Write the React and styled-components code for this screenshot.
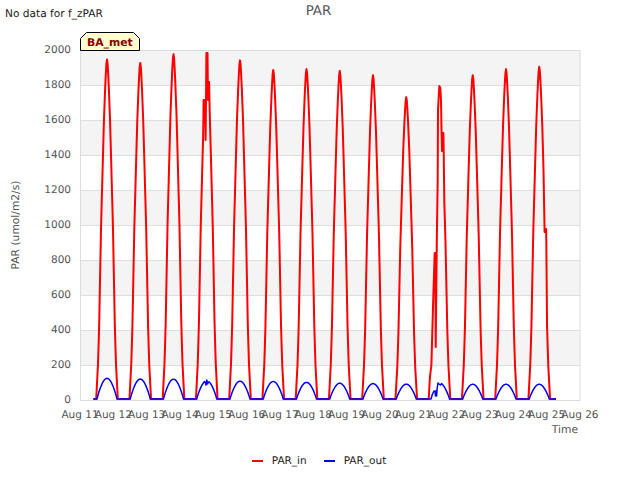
import React from 'react';
import styled, { createGlobalStyle } from 'styled-components';

const Global = createGlobalStyle`
  html, body { margin: 0; padding: 0; background: #fff; }
  body { width: 640px; height: 480px; overflow: hidden; font-family: "DejaVu Sans", sans-serif; text-rendering: geometricPrecision; }
`;
const Figure = styled.div`
  width: 640px; height: 480px; display: flex; flex-direction: column; background: #fff;
`;
const Header = styled.header`
  height: 24px; display: grid; grid-template-columns: 1fr auto 1fr; align-items: start;
`;
const Note = styled.div`
  font-size: 10.6px; line-height: 13px; color: #222; padding: 8px 0 0 5px; white-space: nowrap;
`;
const Title = styled.h1`
  margin: 0; font-size: 13.4px; line-height: 15px; font-weight: 400; color: #555; padding: 4px 3px 0 0;
`;
const Plot = styled.svg`
  display: block; width: 640px; height: 426px; flex: none;
`;
const Legend = styled.footer`
  flex: 1; display: flex; justify-content: center; align-items: flex-start; gap: 17px; padding: 4px 2px 0 0;
`;
const LegendItem = styled.div`
  display: flex; align-items: center; gap: 9px; font-size: 10.5px; line-height: 14px; color: #222;
`;
const Swatch = styled.span`
  width: 11px; height: 2px; background: ${p => p.$color};
`;

const X0 = 80, DAY = 33.33, Y0 = 400, K = 0.175, YD = 399;
const py = v => YD - v * K;
const V = y => (YD - y) / K;
const peaks = [1940, 1920, 1970, 1975, 1935, 1880, 1885, 1875, 1850, 1725, 1790, 1850, 1885, 1898];
const blue = [118, 114, 113, 105, 102, 100, 95, 90, 88, 85, 92, 84, 84, 84];
const centre = i => 107 + i * 33.25;

// Profile of one day's PAR_in: distance from the noon peak -> share of the peak.
const profile = [[0, 1], [0.7, 0.985], [1.65, 0.93], [3, 0.825], [4, 0.72], [4.9, 0.62], [5.9, 0.515], [7.9, 0.206], [9, 0.103], [10.8, 0]];
const share = d => {
  for (let i = 1; i < profile.length; i++) {
    if (d <= profile[i][0]) {
      const [a, b] = [profile[i - 1], profile[i]];
      return a[1] + ((b[1] - a[1]) * (d - a[0])) / (b[0] - a[0]);
    }
  }
  return 0;
};
const redDay = (p, c) => {
  const out = [];
  for (let d = -10.8; d <= 10.8001; d += 0.6) out.push([c + d, p * share(Math.abs(d))]);
  return out;
};
const blueDay = (p, c) => {
  const out = [];
  for (let s = 0; s <= 30; s++) {
    const t = s / 30;
    out.push([c - 10 + 20 * t, p * Math.pow(Math.sin(Math.PI * t), 0.9)]);
  }
  return out;
};
const splice = (pts, from, to, extra) => [
  ...pts.filter(([x]) => x < from),
  ...extra.map(([x, y]) => [x, V(y)]),
  ...pts.filter(([x]) => x > to),
];
const redFix = {
  3: pts => splice(pts, 203.4, 209.4, [[203.6, 100], [205, 100], [205.6, 140], [206, 100], [206.4, 53], [207.5, 53], [208, 100], [208.3, 100], [208.7, 82], [209.1, 82]]),
  10: pts => splice(pts, 430.3, 443.8, [[431.4, 365], [433.2, 300], [434.7, 253], [435.3, 253], [435.7, 347], [436.8, 240], [437.7, 180], [438, 110], [439.3, 86], [440.3, 88], [441, 100], [441.5, 130], [442, 151], [442.6, 151], [443, 133], [443.4, 133], [443.7, 151]]),
  13: pts => splice(pts, 543.8, 546.6, [[544.6, 232], [544.9, 229], [546.1, 229], [546.3, 240]]),
};
const blueFix = {
  3: pts => splice(pts, 205, 209, [[205.4, 383], [206, 385], [206.8, 380], [207.6, 384], [208.4, 382]]),
  10: pts => splice(pts, 429.5, 441, [[431, 399], [432.5, 394], [434, 391], [435, 391], [435.5, 396], [436, 391], [436.6, 396], [437.2, 388], [438, 383], [439, 384], [440.5, 385]]),
};
const build = (vals, day, fix, start, end) => {
  const pts = [[start, 0]];
  vals.forEach((p, i) => {
    const c = centre(i);
    const one = fix[i] ? fix[i](day(p, c)) : day(p, c);
    pts.push(...one);
  });
  pts.push([end, 0]);
  return pts;
};
const toPath = pts => pts.map(([x, v], i) => `${i ? 'L' : 'M'}${x.toFixed(2)} ${py(v).toFixed(2)}`).join('');
const redPts = build(peaks, redDay, redFix, 94, 556);
const bluePts = build(blue, blueDay, blueFix, 93, 556);
const bands = [1800, 1400, 1000, 600, 200];
const yTicks = [0, 200, 400, 600, 800, 1000, 1200, 1400, 1600, 1800, 2000];
const days = Array.from({ length: 16 }, (_, i) => 11 + i);

const Grid = styled.line`stroke: #dedede; stroke-width: 1;`;
const Band = styled.rect`fill: #f4f4f4;`;
const Frame = styled.rect`fill: none; stroke: #dcdcdc; stroke-width: 1;`;
const Tick = styled.text`font-size: 10.5px; fill: #555; font-family: "DejaVu Sans", sans-serif;`;
const AxisName = styled.text`font-size: 10.7px; fill: #555; font-family: "DejaVu Sans", sans-serif;`;
const Line = styled.path`fill: none; stroke: ${p => p.$c}; stroke-width: ${p => p.$w}; stroke-linejoin: round;`;
const Badge = styled.path`fill: #ffffd0; stroke: #000; stroke-width: 1;`;
const BadgeText = styled.text`font-size: 10.8px; font-weight: 700; fill: #8b0000; font-family: "DejaVu Sans", sans-serif;`;

export default function App() {
  return (
    <Figure>
      <Global />
      <Header>
        <Note>No data for f_zPAR</Note>
        <Title>PAR</Title>
        <span />
      </Header>
      <Plot viewBox="0 24 640 426">
        {bands.map(v => <Band key={v} x={80.5} y={Y0 - (v + 200) * K} width={499.5} height={200 * K} />)}
        {yTicks.map(v => <Grid key={v} x1={80.5} x2={580} y1={Y0 - v * K + 0.5} y2={Y0 - v * K + 0.5} />)}
        <Frame x={80.5} y={50.5} width={499.5} height={350} />
        {yTicks.map(v => <Tick key={v} x={71} y={Y0 - v * K + 3} textAnchor="end">{v}</Tick>)}
        {days.map((d, i) => <Tick key={d} x={X0 + i * DAY} y={418} textAnchor="middle">Aug {d}</Tick>)}
        <AxisName x={578} y={433} textAnchor="end">Time</AxisName>
        <AxisName transform="translate(19 225) rotate(-90)" textAnchor="middle">PAR (umol/m2/s)</AxisName>
        <Line $c="#ff0000" $w={2} d={toPath(redPts)} />
        <Line $c="#0000ff" $w={1.5} d={toPath(bluePts)} />
        <Badge d="M80.5 50.5V38.5L86.5 32.5H133.5L139.5 38.5V50.5Z" />
        <BadgeText x={87} y={46}>BA_met</BadgeText>
      </Plot>
      <Legend>
        <LegendItem><Swatch $color="#ff0000" />PAR_in</LegendItem>
        <LegendItem><Swatch $color="#0000ff" />PAR_out</LegendItem>
      </Legend>
    </Figure>
  );
}
